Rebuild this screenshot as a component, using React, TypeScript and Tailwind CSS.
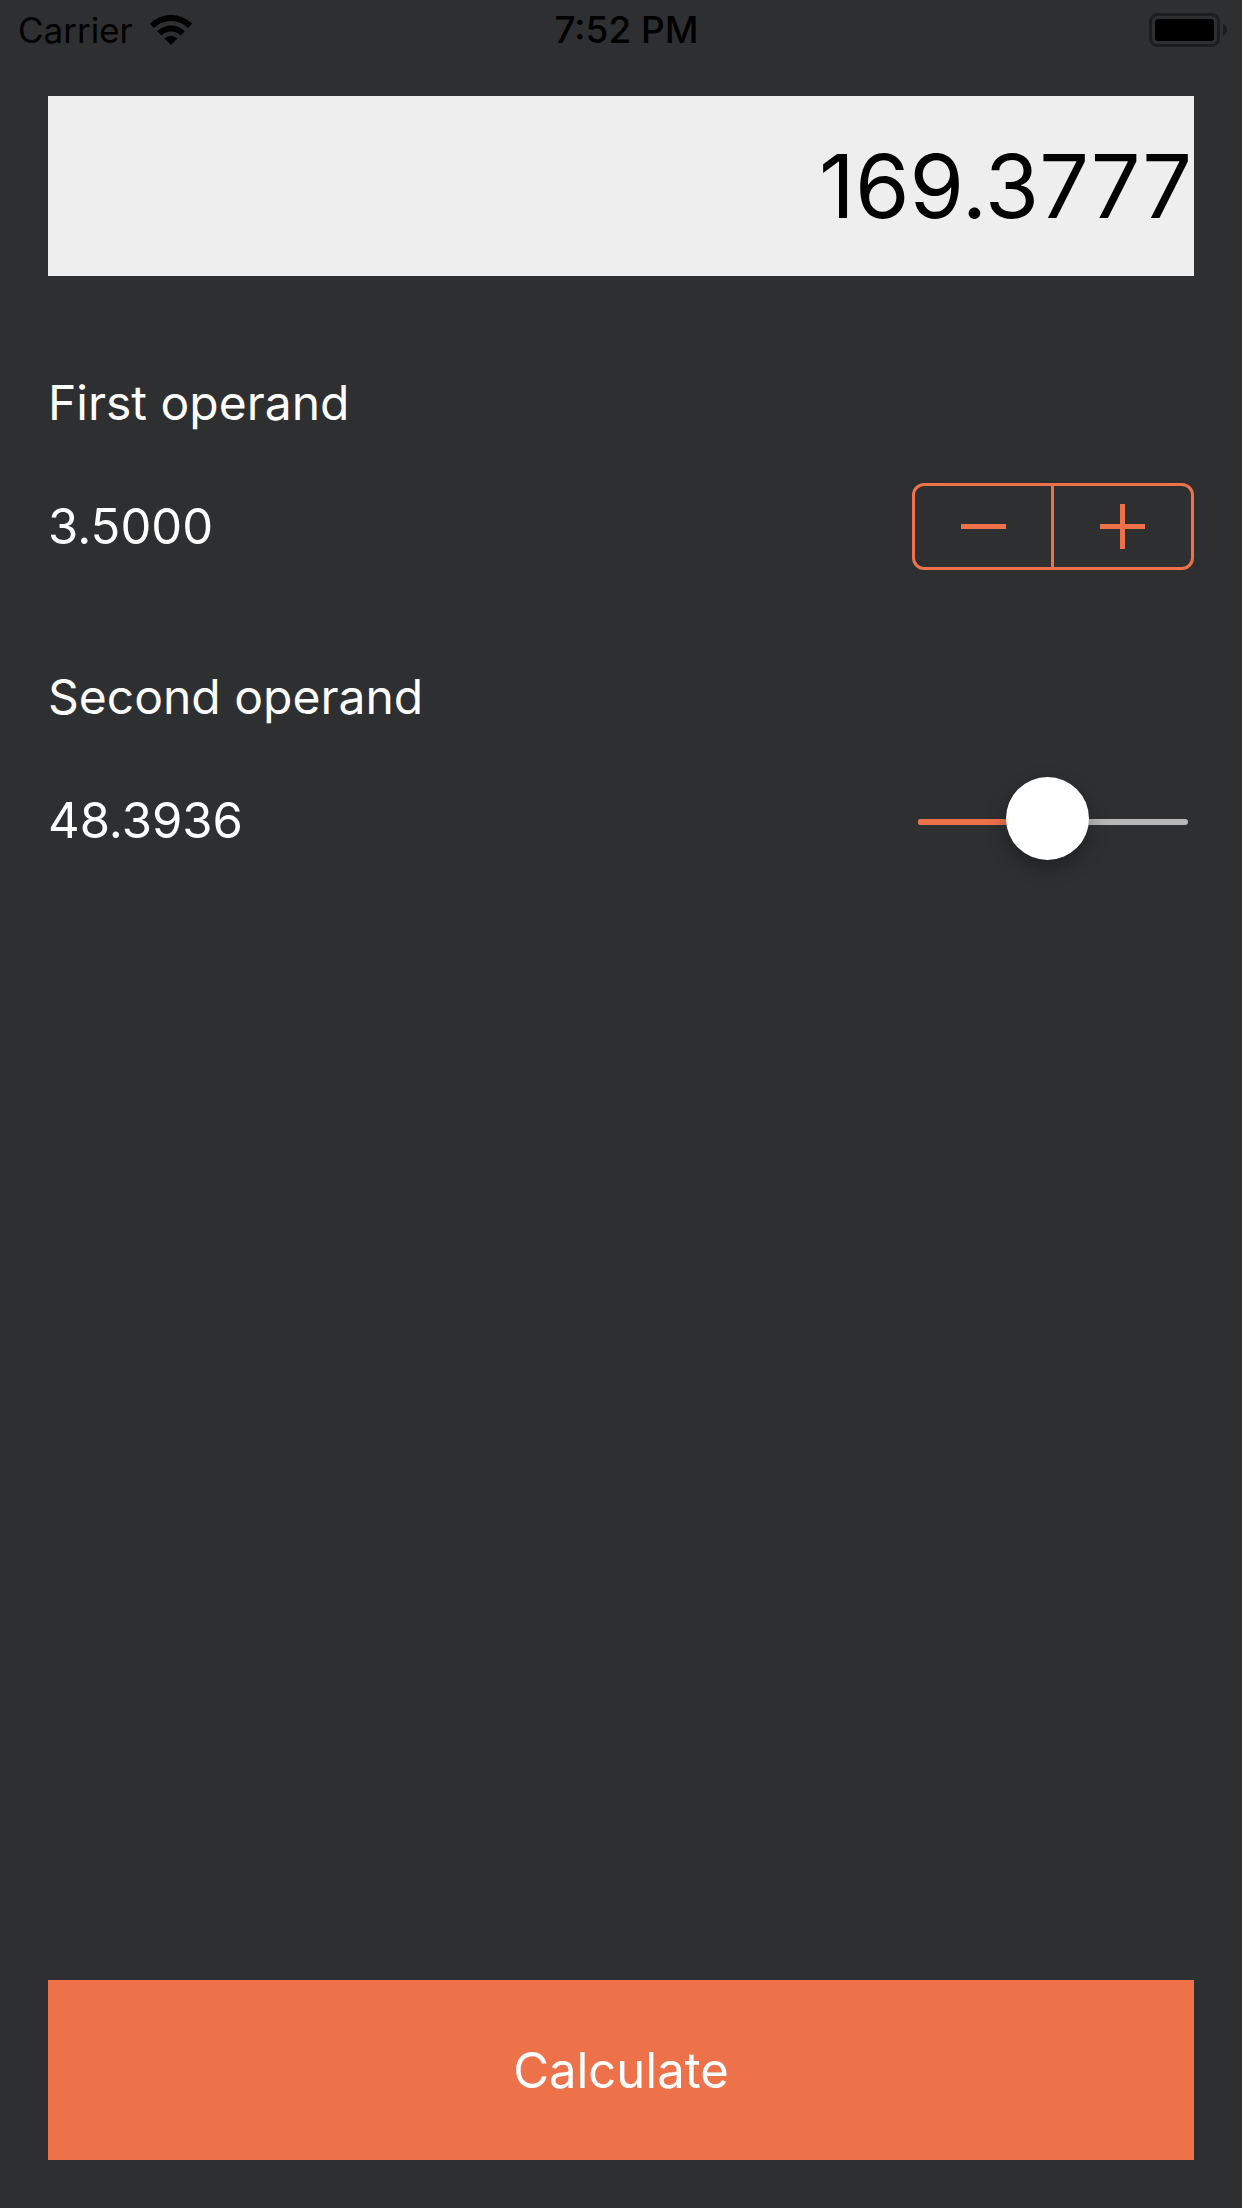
import { useState } from "react";

function WifiIcon() {
  return (
    <svg className="h-[30px] w-[42px]" viewBox="0 0 42 30" fill="none" stroke="black" aria-hidden="true">
      <path d="M1.91 10.91A27 27 0 0 1 40.09 10.91" strokeWidth="6" />
      <path d="M9.33 18.33A16.5 16.5 0 0 1 32.67 18.33" strokeWidth="6" />
      <path d="M21 30L14.4 23.4A9.3 9.3 0 0 1 27.6 23.4Z" fill="black" stroke="none" />
    </svg>
  );
}

function BatteryIcon() {
  return (
    <svg className="h-[34px] w-[78px]" viewBox="0 0 78 34" aria-hidden="true">
      <rect x="1.5" y="1.5" width="68" height="31" rx="7" fill="none" stroke="#1c1d1e" strokeWidth="3" />
      <rect x="6" y="6" width="59" height="22" rx="3" fill="black" />
      <path d="M74 11C76.6 12.2 78 14.5 78 17C78 19.5 76.6 21.8 74 23Z" fill="#1c1d1e" />
    </svg>
  );
}

function StatusBar() {
  return (
    <header className="grid h-15 grid-cols-[1fr_auto_1fr] items-center pr-[15px] pl-[18px] leading-[60px] text-black">
      <div className="flex items-center gap-[17px] text-[35px]">
        <span>Carrier</span>
        <WifiIcon />
      </div>
      <time className="pl-2 text-[37px] font-medium">7:52 PM</time>
      <div className="flex justify-end">
        <BatteryIcon />
      </div>
    </header>
  );
}

export default function App() {
  const [first, setFirst] = useState(3.5);
  const [second, setSecond] = useState(48.39363);
  const [result, setResult] = useState(3.5 * 48.39363);

  return (
    <div className="flex min-h-screen flex-col bg-[#2e2f31] font-['Inter',sans-serif]">
      <StatusBar />
      <main className="flex flex-1 flex-col px-12 pt-9 pb-12 text-[49px] leading-[62px] text-white">
        <output className="flex h-45 items-center justify-end bg-[#eeeeee] pr-[2px] text-[88px] leading-none text-black">
          {result.toFixed(4)}
        </output>

        <section className="mt-24" aria-labelledby="first-label">
          <h2 id="first-label" className="text-[48px]">
            First operand
          </h2>
          <div className="mt-[49px] flex h-[87px] items-center justify-between">
            <span>{first.toFixed(4)}</span>
            <div className="flex h-full w-[282px] rounded-xl border-3 border-[#ed7149]">
              <button
                type="button"
                aria-label="Decrease first operand"
                onClick={() => setFirst(first - 0.5)}
                className="flex w-[139px] items-center justify-center border-r-3 border-[#ed7149]"
              >
                <span className="h-[5px] w-[45px] bg-[#ed7149]" />
              </button>
              <button
                type="button"
                aria-label="Increase first operand"
                onClick={() => setFirst(first + 0.5)}
                className="flex flex-1 items-center justify-center"
              >
                <svg className="size-[45px]" viewBox="0 0 45 45" fill="#ed7149" aria-hidden="true">
                  <path d="M20 0H25V20H45V25H25V45H20V25H0V20H20Z" />
                </svg>
              </button>
            </div>
          </div>
        </section>

        <section className="mt-24" aria-labelledby="second-label">
          <h2 id="second-label" className="text-[48px]">
            Second operand
          </h2>
          <div className="mt-[49px] flex h-[87px] items-center justify-between">
            <span>{second.toFixed(4)}</span>
            <div className="relative flex h-full w-[282px] items-center px-[6px]">
              <div className="mt-[3px] h-[6px] w-full overflow-hidden rounded-full bg-[#b7b7b7]">
                <div className="h-full bg-[#ed7149]" style={{ width: `${second}%` }} />
              </div>
              <input
                type="range"
                min={0}
                max={100}
                step="any"
                value={second}
                onChange={(e) => setSecond(Number(e.target.value))}
                aria-labelledby="second-label"
                className="absolute top-0 left-0 h-[83px] w-[278px] appearance-none bg-transparent [&::-webkit-slider-thumb]:size-[83px] [&::-webkit-slider-thumb]:appearance-none [&::-webkit-slider-thumb]:rounded-full [&::-webkit-slider-thumb]:bg-white [&::-webkit-slider-thumb]:shadow-[0_8px_20px_rgba(0,0,0,0.3)]"
              />
            </div>
          </div>
        </section>

        <button
          type="button"
          onClick={() => setResult(first * second)}
          className="mt-auto h-45 w-full bg-[#ed7149] pt-[2px]"
        >
          Calculate
        </button>
      </main>
    </div>
  );
}
